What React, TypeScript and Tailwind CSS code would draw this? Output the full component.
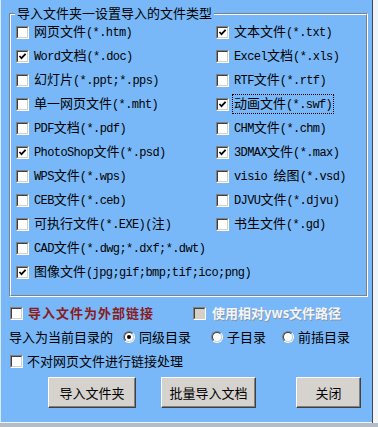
import React from 'react'

const cjk = "font-['Noto_Sans_CJK_SC',sans-serif]"

function Mixed({ s }: { s: string }) {
  const parts = s.split(/([\u4e00-\u9fff\u3000-\u303f\uff00-\uffef]+)/).filter(Boolean)
  return (
    <>
      {parts.map((p, i) =>
        /[\u4e00-\u9fff\u3000-\u303f\uff00-\uffef]/.test(p) ? (
          <span key={i} className="text-[13px]">{p}</span>
        ) : (
          <span key={i} className="font-['Liberation_Mono',monospace] text-[12px] tracking-[-0.6px]">{p}</span>
        )
      )}
    </>
  )
}

function Box({ checked, disabled }: { checked?: boolean; disabled?: boolean }) {
  return (
    <span className="flex h-[13px] w-[13px] shrink-0 border border-t-[#808080] border-l-[#808080] border-r-white border-b-white">
      <span
        className={`flex h-full w-full items-center justify-center border border-t-[#404040] border-l-[#404040] border-r-[#d4d0c8] border-b-[#d4d0c8] ${
          disabled ? 'bg-[#d4d0c8]' : 'bg-white'
        }`}
      >
        {checked && (
          <svg width="9" height="9" viewBox="0 0 9 9">
            <path d="M1.5 4 L3.5 6.2 L7.6 1.8" fill="none" stroke="#000" strokeWidth="1.7" />
          </svg>
        )}
      </span>
    </span>
  )
}

function Radio({ on }: { on?: boolean }) {
  return (
    <span className="flex h-[12px] w-[12px] shrink-0 items-center justify-center rounded-full border border-t-[#808080] border-l-[#808080] border-r-white border-b-white">
      <span className="flex h-full w-full items-center justify-center rounded-full border border-t-[#404040] border-l-[#404040] border-r-[#d4d0c8] border-b-[#d4d0c8] bg-white">
        {on && <span className="h-[4px] w-[4px] rounded-full bg-black" />}
      </span>
    </span>
  )
}

function Item({ label, checked, focus }: { label: string; checked?: boolean; focus?: boolean }) {
  return (
    <div className="flex h-[24px] items-center gap-[5px]">
      <Box checked={checked} />
      <span className={`whitespace-nowrap leading-[15px] text-black ${focus ? 'border border-dotted border-black px-px -ml-[2px]' : ''}`}>
        <Mixed s={label} />
      </span>
    </div>
  )
}

function Btn({ w, children }: { w: string; children: React.ReactNode }) {
  return (
    <button
      className={`${w} h-[31px] border border-t-white border-l-white border-r-[#404040] border-b-[#404040] bg-[#d6d3ce] text-[13px] text-black shadow-[inset_-1px_-1px_0_#808080]`}
    >
      {children}
    </button>
  )
}

const left = [
  ['网页文件(*.htm)', false],
  ['Word文档(*.doc)', true],
  ['幻灯片(*.ppt;*.pps)', false],
  ['单一网页文件(*.mht)', false],
  ['PDF文档(*.pdf)', false],
  ['PhotoShop文件(*.psd)', true],
  ['WPS文件(*.wps)', false],
  ['CEB文件(*.ceb)', false],
  ['可执行文件(*.EXE)(注)', false],
  ['CAD文件(*.dwg;*.dxf;*.dwt)', false],
  ['图像文件(jpg;gif;bmp;tif;ico;png)', true],
] as const

const right = [
  ['文本文件(*.txt)', true],
  ['Excel文档(*.xls)', false],
  ['RTF文件(*.rtf)', false],
  ['动画文件(*.swf)', true],
  ['CHM文件(*.chm)', false],
  ['3DMAX文件(*.max)', true],
  ['visio 绘图(*.vsd)', false],
  ['DJVU文件(*.djvu)', false],
  ['书生文件(*.gd)', false],
] as const

export default function App() {
  return (
    <div className={`${cjk} flex h-[427px] w-[378px] flex-col overflow-hidden bg-[#b4bcc6]`}>
      <div className="flex h-[423px] shrink-0">
        <div className="flex h-full w-[372px] flex-col border-l border-b border-l-[#d8eafc] border-b-[#eef4fa] bg-[#79b8f8] pt-[13px] pl-[8px] text-[13px] text-black">
          {/* group box */}
          <div className="relative h-[284px] w-[359px] border border-t-[#808080] border-l-[#808080] border-r-white border-b-white">
            <div className="h-full w-full border border-t-white border-l-white border-r-[#808080] border-b-[#808080] pl-[5px] pt-[5px]">
              <span className="absolute -top-[8px] left-[5px] bg-[#79b8f8] px-[2px] leading-[13px] whitespace-nowrap">
                导入文件夹一设置导入的文件类型
              </span>
              <div className="grid grid-cols-[200px_1fr]">
                <div className="flex flex-col">
                  {left.map(([l, c]) => (
                    <Item key={l} label={l} checked={c} />
                  ))}
                </div>
                <div className="flex flex-col">
                  {right.map(([l, c]) => (
                    <Item key={l} label={l} checked={c} focus={l === '动画文件(*.swf)'} />
                  ))}
                </div>
              </div>
            </div>
          </div>

          {/* options */}
          <div className="mt-[6px] flex h-[20px] items-center">
            <div className="flex w-[184px] items-center gap-[5px] pl-px">
              <Box />
              <span className="whitespace-nowrap text-[13px] font-bold tracking-[1px] text-[#8a1a1c]">导入文件为外部链接</span>
            </div>
            <div className="flex items-center gap-[6px]">
              <Box disabled />
              <span className="whitespace-nowrap text-[13px] font-bold text-[#f2f6fa] [text-shadow:1px_1px_0_#8595aa]">
                使用相对yws文件路径
              </span>
            </div>
          </div>

          <div className="mt-[4px] flex h-[20px] items-center">
            <span className="w-[114px] whitespace-nowrap">导入为当前目录的</span>
            <div className="flex w-[88px] items-center gap-[4px]">
              <Radio on />
              <span>同级目录</span>
            </div>
            <div className="flex w-[71px] items-center gap-[4px]">
              <Radio />
              <span>子目录</span>
            </div>
            <div className="flex items-center gap-[4px]">
              <Radio />
              <span>前插目录</span>
            </div>
          </div>

          <div className="mt-[4px] flex h-[20px] items-center gap-[4px] pl-px">
            <Box />
            <span className="whitespace-nowrap">不对网页文件进行链接处理</span>
          </div>

          <div className="mt-[6px] flex pl-[39px]">
            <Btn w="w-[88px]">导入文件夹</Btn>
            <div className="w-[25px]" />
            <Btn w="w-[95px]">批量导入文档</Btn>
            <div className="w-[40px]" />
            <Btn w="w-[65px]">关闭</Btn>
          </div>
        </div>
        <div className="h-full flex-1 border-l border-l-[#3c4a5c] bg-[#f2f4f6]" />
      </div>
    </div>
  )
}
